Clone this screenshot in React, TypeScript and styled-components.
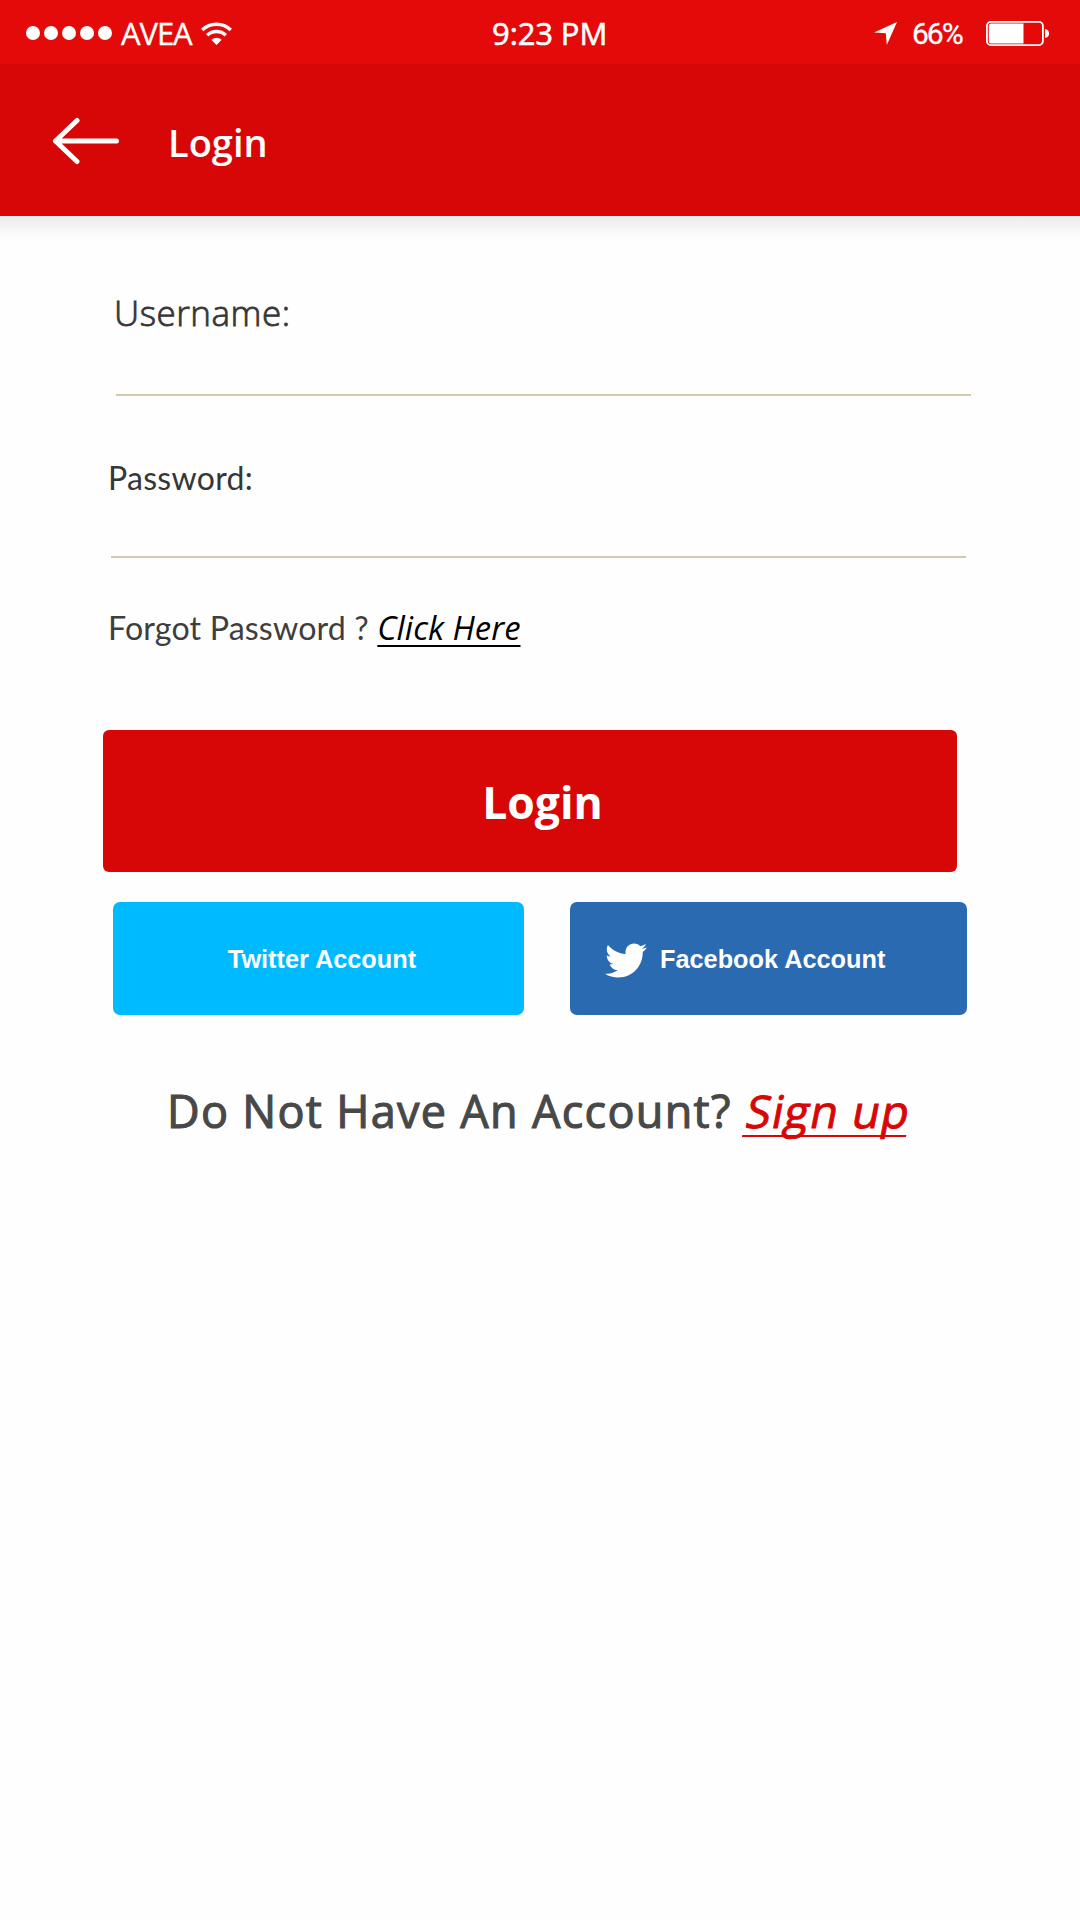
import React from "react";
import styled, { createGlobalStyle } from "styled-components";
import { FaTwitter } from "react-icons/fa";

const GlobalStyle = createGlobalStyle`
  *, *::before, *::after { box-sizing: border-box; }
  body { margin: 0; background: #fefefe; }
`;

const Screen = styled.div`
  display: flex;
  flex-direction: column;
  width: 1080px;
  height: 1920px;
  overflow: hidden;
  background: #fefefe;
  color: #363636;
  font-family: "Open Sans", "Noto Sans", sans-serif;
`;

const StatusBar = styled.div`
  display: grid;
  grid-template-columns: 466px 1fr auto;
  align-items: center;
  height: 64px;
  padding: 2px 31px 0 26px;
  background: #e30a09;
  color: #fff;
  font-size: 31px;
  line-height: 50px;
  white-space: nowrap;
`;

const StatusGroup = styled.div`
  display: flex;
  align-items: center;
`;

const SignalDots = styled.div`
  display: flex;
  gap: 4px;
`;

const Dot = styled.span`
  width: 14px;
  height: 14px;
  border-radius: 50%;
  background: #fff;
`;

const Carrier = styled.span`
  width: 80px;
  margin: -1px 0 0 9px;
  letter-spacing: -1.1px;
  -webkit-text-stroke: 0.3px #fff;
`;

const Clock = styled.span`
  letter-spacing: -0.1px;
  -webkit-text-stroke: 0.6px #fff;
`;

const Percent = styled.span`
  width: 74px;
  margin-left: 15px;
  padding-top: 2px;
  font-family: Roboto, sans-serif;
  font-size: 30px;
  letter-spacing: -2px;
  -webkit-text-stroke: 0.3px #fff;
`;

const Header = styled.header`
  display: flex;
  align-items: center;
  height: 152px;
  padding: 2px 0 0 52px;
  background: #d70707;
  color: #fff;
`;

const Title = styled.h1`
  margin: 2px 0 0 48px;
  font-size: 38px;
  font-weight: 600;
  line-height: 60px;
`;

const HeaderShade = styled.div`
  height: 24px;
  background: linear-gradient(#ebebeb, #fefefe 22px);
`;

const Form = styled.main`
  display: flex;
  flex-direction: column;
  align-items: flex-start;
`;

const Field = styled.label`
  display: block;
  width: 855px;
  border-bottom: 2px solid #d3c9ac;
  line-height: 50px;
`;

const UsernameField = styled(Field)`
  height: 108px;
  margin: 48px 0 0 116px;
  font-size: 35px;
  font-weight: 300;
  letter-spacing: 0.5px;
  text-indent: -2px;
  -webkit-text-stroke: 0.8px #363636;
`;

const PasswordField = styled(Field)`
  height: 105px;
  margin: 57px 0 0 111px;
  font-family: Lato, sans-serif;
  font-size: 32px;
  letter-spacing: 0.3px;
  text-indent: -3px;
`;

const Forgot = styled.p`
  margin: 45px 0 0 108px;
  color: #3e3e3e;
  font-family: Lato, sans-serif;
  font-size: 32.2px;
  line-height: 50px;
  letter-spacing: 0.15px;
  white-space: nowrap;
`;

const TextLink = styled.a`
  text-decoration: underline;
  text-decoration-thickness: 2px;
  text-decoration-skip-ink: none;
`;

const ForgotLink = styled(TextLink)`
  color: #000;
  font: italic 400 32.8px/50px "Open Sans", sans-serif;
  letter-spacing: 0;
  text-underline-offset: 5px;
`;

const SignUpLink = styled(TextLink)`
  display: inline-block;
  margin-left: 2px;
  color: #d70707;
  transform: skewX(-11deg);
  text-underline-offset: 7px;
  -webkit-text-stroke: 1px #d70707;
`;

const Button = styled.button`
  display: flex;
  align-items: center;
  border: 0;
  color: #fff;
  white-space: nowrap;
`;

const LoginButton = styled(Button)`
  justify-content: center;
  width: 854px;
  height: 142px;
  margin: 77px 0 0 103px;
  padding: 2px 0 0 25px;
  border-radius: 6px;
  background: #d70707;
  font: 700 44.5px/60px "Open Sans", sans-serif;
`;

const SocialRow = styled.div`
  display: flex;
  gap: 46px;
  margin: 30px 0 0 113px;
`;

const SocialButton = styled(Button)`
  height: 113px;
  border-radius: 7px;
  font: 700 25.3px/40px "Liberation Sans", Arial, sans-serif;
`;

const TwitterButton = styled(SocialButton)`
  justify-content: center;
  width: 411px;
  padding: 1px 0 0 7px;
  background: #00baff;
`;

const FacebookButton = styled(SocialButton)`
  gap: 13px;
  width: 397px;
  padding: 1px 0 0 35px;
  background: #2a6ab1;
`;

const Bird = styled(FaTwitter)`
  width: 42px;
  height: 43px;
  margin-top: 3px;
`;

const SignUp = styled.p`
  margin: 66px 0 0 167px;
  color: #484848;
  font-size: 45px;
  line-height: 60px;
  letter-spacing: 1.3px;
  white-space: nowrap;
  -webkit-text-stroke: 1.1px #484848;
`;

const WifiIcon = () => (
  <svg width="31" height="23" viewBox="0 0 31 23" fill="none" stroke="#fff" strokeWidth="3.4">
    <path d="M1.2 8A20.5 20.5 0 0 1 29.8 8" />
    <path d="M6.2 13.2A13.4 13.4 0 0 1 24.8 13.2" />
    <path d="M10.3 17.7Q15.5 13.7 20.7 17.7L15.5 23Z" fill="#fff" stroke="none" />
  </svg>
);

const LocationIcon = () => (
  <svg width="23" height="23" viewBox="0 0 23 23" fill="#fff">
    <path d="M23 0L12.8 23L11.8 11.2L0 10.6Z" />
  </svg>
);

const BatteryIcon = () => (
  <svg width="63" height="25" viewBox="0 0 63 25">
    <rect x="0.9" y="0.9" width="56" height="23.2" rx="4" fill="none" stroke="#fff" strokeWidth="1.8" />
    <path d="M4.8 2.6H37.5V22.4H4.8Q2.8 22.4 2.8 20.4V4.6Q2.8 2.6 4.8 2.6Z" fill="#fff" />
    <path d="M59 8Q63 8.6 63 12.5T59 17Z" fill="#fff" />
  </svg>
);

const BackIcon = () => (
  <svg width="68" height="48" viewBox="0 0 68 48" fill="none" stroke="#fff" strokeWidth="5" strokeLinecap="round" strokeLinejoin="round">
    <path d="M64.5 24H3.5M25 3.5L3.5 24L25 44.5" />
  </svg>
);

export default function App() {
  return (
    <Screen>
      <GlobalStyle />
      <StatusBar>
        <StatusGroup>
          <SignalDots>
            {[0, 1, 2, 3, 4].map((i) => (
              <Dot key={i} />
            ))}
          </SignalDots>
          <Carrier>AVEA</Carrier>
          <WifiIcon />
        </StatusGroup>
        <Clock>9:23 PM</Clock>
        <StatusGroup>
          <LocationIcon />
          <Percent>66%</Percent>
          <BatteryIcon />
        </StatusGroup>
      </StatusBar>
      <Header>
        <BackIcon />
        <Title>Login</Title>
      </Header>
      <HeaderShade />
      <Form>
        <UsernameField>Username:</UsernameField>
        <PasswordField>Password:</PasswordField>
        <Forgot>
          Forgot Password ? <ForgotLink>Click Here</ForgotLink>
        </Forgot>
        <LoginButton>Login</LoginButton>
        <SocialRow>
          <TwitterButton>Twitter Account</TwitterButton>
          <FacebookButton>
            <Bird />
            Facebook Account
          </FacebookButton>
        </SocialRow>
        <SignUp>
          Do Not Have An Account? <SignUpLink>Sign up</SignUpLink>
        </SignUp>
      </Form>
    </Screen>
  );
}
